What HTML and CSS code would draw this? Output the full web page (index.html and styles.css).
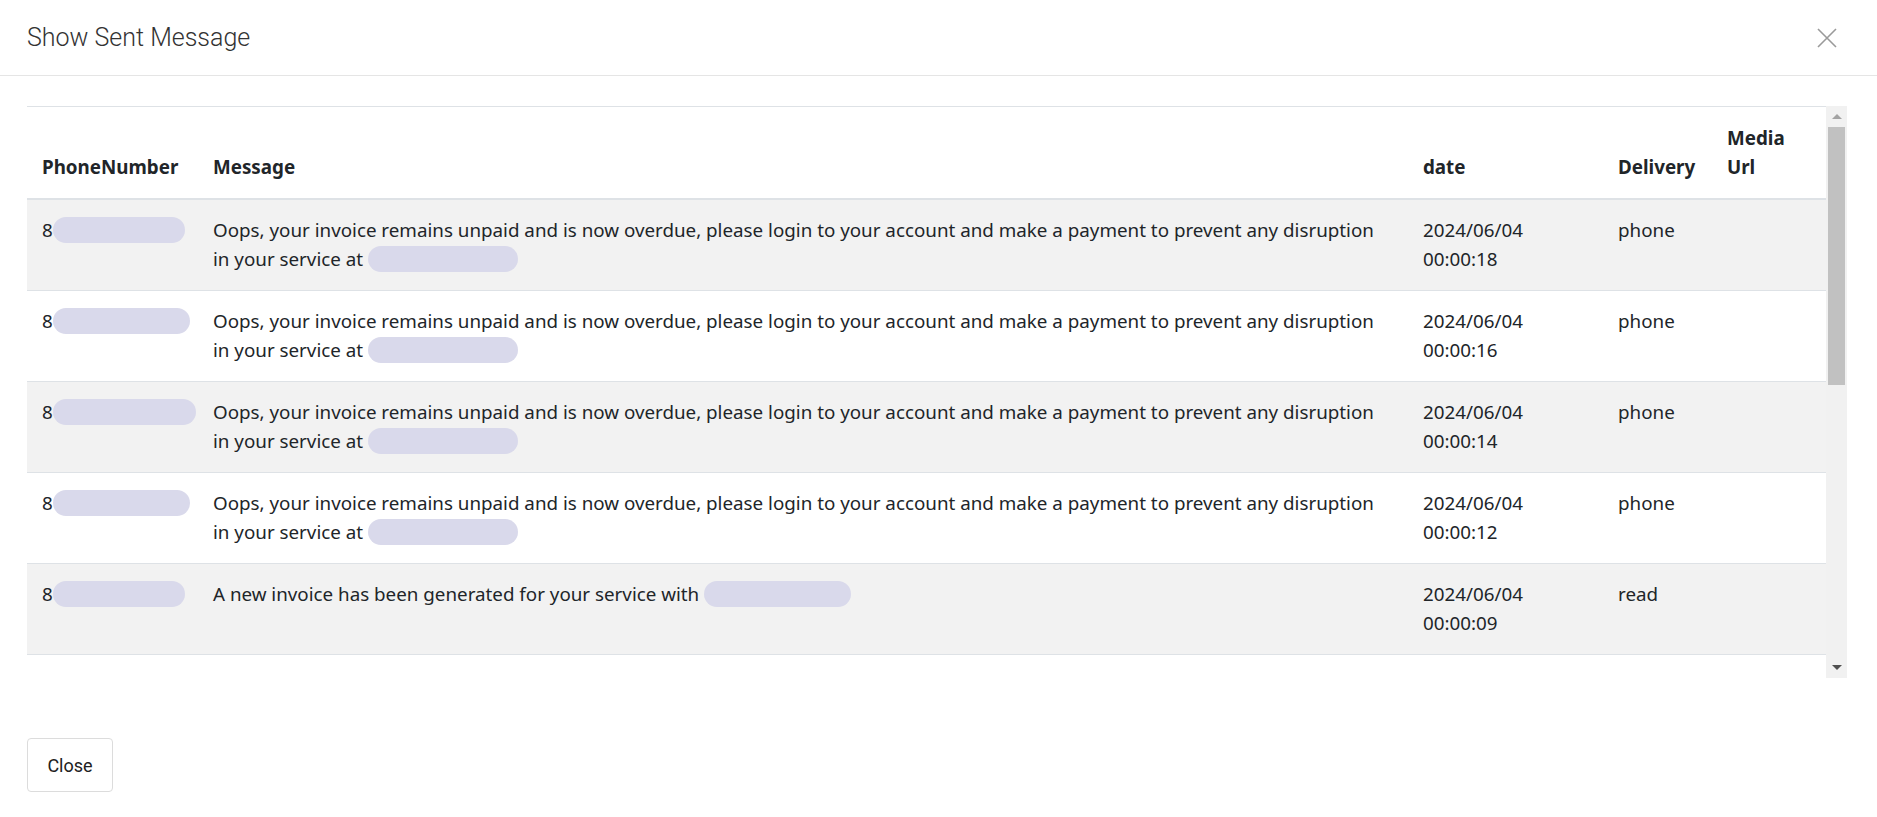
FILE: index.html
```html
<!DOCTYPE html>
<html lang="en">
<head>
<meta charset="utf-8">
<title>Show Sent Message</title>
<link rel="stylesheet" href="styles.css">
</head>
<body>
<div class="modal">
  <div class="modal-header">
    <h4 class="modal-title">Show Sent Message</h4>
    <button class="close-x" aria-label="Close">
      <svg width="20" height="20" viewBox="0 0 20 20"><path d="M1 1 L19 19 M19 1 L1 19" stroke="#9a9a9a" stroke-width="1.6" fill="none"/></svg>
    </button>
  </div>
  <div class="modal-body">
    <div class="scroll-box">
      <div class="table-viewport">
        <table class="msg-table">
          <colgroup>
            <col class="c-phone"><col class="c-msg"><col class="c-date"><col class="c-del"><col class="c-media">
          </colgroup>
          <thead>
            <tr><th>PhoneNumber</th><th>Message</th><th>date</th><th>Delivery</th><th>Media Url</th></tr>
          </thead>
          <tbody>
            <tr>
              <td class="phone">8<span class="redact ph-a"></span></td>
              <td class="msg">Oops, your invoice remains unpaid and is now overdue, please login to your account and make a payment to prevent any disruption in your service at <span class="redact url"></span></td>
              <td>2024/06/04 00:00:18</td><td>phone</td><td></td>
            </tr>
            <tr>
              <td class="phone">8<span class="redact ph-b"></span></td>
              <td class="msg">Oops, your invoice remains unpaid and is now overdue, please login to your account and make a payment to prevent any disruption in your service at <span class="redact url"></span></td>
              <td>2024/06/04 00:00:16</td><td>phone</td><td></td>
            </tr>
            <tr>
              <td class="phone">8<span class="redact ph-c"></span></td>
              <td class="msg">Oops, your invoice remains unpaid and is now overdue, please login to your account and make a payment to prevent any disruption in your service at <span class="redact url"></span></td>
              <td>2024/06/04 00:00:14</td><td>phone</td><td></td>
            </tr>
            <tr>
              <td class="phone">8<span class="redact ph-b"></span></td>
              <td class="msg">Oops, your invoice remains unpaid and is now overdue, please login to your account and make a payment to prevent any disruption in your service at <span class="redact url"></span></td>
              <td>2024/06/04 00:00:12</td><td>phone</td><td></td>
            </tr>
            <tr>
              <td class="phone">8<span class="redact ph-a"></span></td>
              <td class="msg">A new invoice has been generated for your service with <span class="redact url2"></span></td>
              <td>2024/06/04 00:00:09</td><td>read</td><td></td>
            </tr>
            <tr>
              <td class="phone">8</td>
              <td class="msg">Thank you for your payment, your invoice has been marked as paid. Thank you!</td>
              <td>2024/06/03 23:59:58</td><td>read</td><td></td>
            </tr>
          </tbody>
        </table>
      </div>
      <div class="scrollbar">
        <div class="sb-btn"><span class="tri-up"></span></div>
        <div class="sb-track"><div class="sb-thumb"></div></div>
        <div class="sb-btn"><span class="tri-down"></span></div>
      </div>
    </div>
  </div>
  <div class="modal-footer">
    <button class="btn-close">Close</button>
  </div>
</div>
</body>
</html>
```
FILE: styles.css
```css
html, body {
  margin: 0;
  padding: 0;
  background: #ffffff;
}

.modal {
  width: 1877px;
  height: 817px;
  background: #fff;
  font-family: "Noto Sans", "Open Sans", sans-serif;
  color: #212529;
  overflow: hidden;
}

.modal-header {
  height: 75px;
  border-bottom: 1px solid #e5e5e5;
  display: flex;
  align-items: center;
  justify-content: space-between;
  padding: 0 40px 0 27px;
}

.modal-title {
  margin: 0;
  font-family: Roboto, "Liberation Sans", sans-serif;
  font-weight: 300;
  font-size: 25px;
  color: #333;
}

.close-x {
  border: 0;
  background: transparent;
  padding: 0;
  width: 20px;
  height: 20px;
  display: flex;
  cursor: pointer;
}

.modal-body {
  padding: 30px 30px 0 27px;
}

.scroll-box {
  display: flex;
  height: 572px;
}

.table-viewport {
  flex: 1;
  overflow: hidden;
}

.scrollbar {
  width: 21px;
  background: #f1f1f1;
  display: flex;
  flex-direction: column;
}

.sb-btn {
  height: 21px;
  display: flex;
  align-items: center;
  justify-content: center;
}

.tri-up {
  width: 0;
  height: 0;
  border-left: 5px solid transparent;
  border-right: 5px solid transparent;
  border-bottom: 5px solid #a3a3a3;
}

.tri-down {
  width: 0;
  height: 0;
  border-left: 5px solid transparent;
  border-right: 5px solid transparent;
  border-top: 5px solid #505050;
}

.sb-track {
  flex: 1;
  padding: 0 2px;
}

.sb-thumb {
  height: 258px;
  background: #c1c1c1;
}

.msg-table {
  width: 100%;
  table-layout: fixed;
  border-collapse: collapse;
  border-top: 1px solid #dee2e6;
  font-size: 18.8px;
  line-height: 29px;
}

.c-phone { width: 171px; }
.c-msg { width: 1210px; }
.c-date { width: 195px; }
.c-del { width: 109px; }
.c-media { width: 114px; }

.msg-table th {
  text-align: left;
  vertical-align: bottom;
  font-weight: 700;
  padding: 17px 15px 16px;
  border-bottom: 2px solid #dee2e6;
}

.msg-table td {
  vertical-align: top;
  padding: 16px 15px 16px;
  border-bottom: 1px solid #dee2e6;
}

.msg-table td.phone {
  white-space: nowrap;
  overflow: visible;
}

.msg-table td.msg {
  padding-right: 28px;
}

.msg-table tbody tr:nth-child(odd) td {
  background: #f2f2f2;
}

.redact {
  display: inline-block;
  height: 26px;
  background: #d9d9eb;
  border-radius: 13px;
  vertical-align: middle;
  margin-top: -4px;
}

.ph-a { width: 132px; }
.ph-b { width: 137px; }
.ph-c { width: 143px; }
.url { width: 150px; }
.url2 { width: 147px; }

.modal-footer {
  padding: 60px 27px 0;
}

.btn-close {
  width: 86px;
  height: 54px;
  border: 1px solid #dcdcdc;
  border-radius: 4px;
  background: #fff;
  font-family: Roboto, "Liberation Sans", sans-serif;
  font-size: 18px;
  color: #212121;
  padding: 0;
}
```
